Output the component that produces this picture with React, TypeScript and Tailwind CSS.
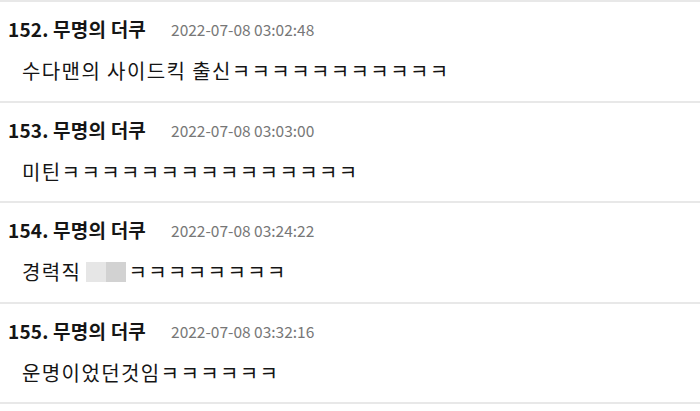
const COMMENTS = [
  { no: 152, date: '2022-07-08 03:02:48', text: '수다맨의 사이드킥 출신', kk: 11, h: 'h-[99px]' },
  { no: 153, date: '2022-07-08 03:03:00', text: '미틴', kk: 15, h: 'h-[98px]' },
  { no: 154, date: '2022-07-08 03:24:22', text: '경력직', kk: 8, h: 'h-[99px]', hidden: true },
  { no: 155, date: '2022-07-08 03:32:16', text: '운명이었던것임', kk: 6, h: 'h-[98px]' },
];

export default function App() {
  return (
    <div
      className="w-[700px] h-[411px] bg-white text-[#151515] overflow-hidden"
      style={{ fontFamily: '"Noto Sans CJK KR", "Noto Sans", sans-serif' }}
    >
      {COMMENTS.map((c) => (
        <div key={c.no} className="border-t-2 border-[#e8e8e8]">
          <div className={`${c.h} pt-[17px] pl-2`}>
            {/* header */}
            <div className="flex items-center h-5 leading-5">
              <span className="text-[19px] font-bold tracking-[0.2px]">
                {c.no}. 무명의 더쿠
              </span>
              <span className="ml-[25px] text-[15.5px] text-[#777]">{c.date}</span>
            </div>
            {/* body */}
            <div className="mt-5 pl-[14px] h-6 leading-6 text-[20px] tracking-[1.4px] flex items-center">
              <span>{c.text}</span>
              {c.hidden && (
                <>
                  <span className="ml-[5px] inline-block w-5 h-5 bg-[#e6e6e6]" />
                  <span className="inline-block w-5 h-5 bg-[#d2d2d2]" />
                </>
              )}
              <span className={c.hidden ? 'ml-[2px]' : ''}>{'ㅋ'.repeat(c.kk)}</span>
            </div>
          </div>
        </div>
      ))}
      <div className="border-t-2 border-[#e8e8e8]" />
    </div>
  );
}
